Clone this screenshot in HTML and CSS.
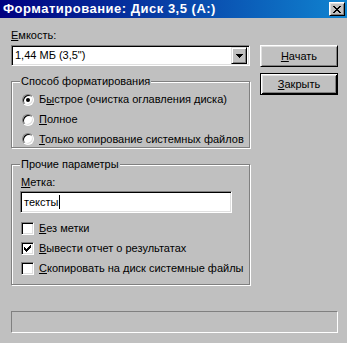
FILE: index.html
```html
<!DOCTYPE html>
<html lang="ru">
<head>
  <meta charset="UTF-8" />
  <title>Форматирование: Диск 3,5 (A:)</title>
  <meta name="viewport" content="width=device-width, initial-scale=1" />
  <link rel="stylesheet" href="styles.css">
</head>
<body>
  <div class="window">
    <div class="titlebar">
      <span class="title">Форматирование: Диск 3,5 (A:)</span>
      <button class="close-btn" type="button">
        <svg width="8" height="7" viewBox="0 0 8 7" shape-rendering="crispEdges">
          <path d="M0 0h2v1h-2zM6 0h2v1h-2zM1 1h2v1h-2zM5 1h2v1h-2zM2 2h4v1h-4zM3 3h2v1h-2zM2 4h4v1h-4zM1 5h2v1h-2zM5 5h2v1h-2zM0 6h2v1h-2zM6 6h2v1h-2z" fill="#000"/>
        </svg>
      </button>
    </div>

    <div class="client">
      <div class="main">
        <div class="left">
          <div class="field-label"><u>Е</u>мкость:</div>
          <div class="combo">
            <span class="combo-value">1,44 МБ (3,5")</span>
            <span class="combo-btn">
              <svg width="7" height="4" viewBox="0 0 7 4" shape-rendering="crispEdges">
                <path d="M0 0h7v1h-7zM1 1h5v1h-5zM2 2h3v1h-3zM3 3h1v1h-1z" fill="#000"/>
              </svg>
            </span>
          </div>

          <fieldset class="group group-mode">
            <legend>Способ форматирования</legend>
            <div class="option radio-option"><span class="radio checked"></span><span>Б<u>ы</u>строе (очистка оглавления диска)</span></div>
            <div class="option radio-option"><span class="radio"></span><span><u>П</u>олное</span></div>
            <div class="option radio-option"><span class="radio"></span><span><u>Т</u>олько копирование системных файлов</span></div>
          </fieldset>

          <fieldset class="group group-other">
            <legend>Прочие параметры</legend>
            <div class="field-label inner-label"><u>М</u>етка:</div>
            <div class="textbox">тексты<span class="caret"></span></div>
            <div class="checks">
              <div class="option"><span class="check"></span><span><u>Б</u>ез метки</span></div>
              <div class="option">
                <span class="check">
                  <svg width="7" height="7" viewBox="0 0 7 7" shape-rendering="crispEdges">
                    <path d="M6 0h1v3h-1zM5 1h1v3h-1zM4 2h1v3h-1zM3 3h1v3h-1zM2 4h1v3h-1zM1 3h1v3h-1zM0 2h1v3h-1z" fill="#000"/>
                  </svg>
                </span>
                <span><u>В</u>ывести отчет о результатах</span>
              </div>
              <div class="option"><span class="check"></span><span><u>С</u>копировать на диск системные файлы</span></div>
            </div>
          </fieldset>
        </div>

        <div class="right">
          <button class="btn" type="button"><u>Н</u>ачать</button>
          <button class="btn btn-default" type="button"><u>З</u>акрыть</button>
        </div>
      </div>

      <div class="progress"></div>
    </div>
  </div>
</body>
</html>
```

FILE: styles.css
```css
body {
  margin: 0;
  padding: 0;
  background: #c0c0c0;
  font-family: 'Liberation Sans', Arial, sans-serif;
  font-size: 11px;
  color: #000;
}

.window {
  width: 347px;
  height: 343px;
  background: #c0c0c0;
  overflow: hidden;
}

u {
  text-decoration: underline;
  text-underline-offset: 1px;
}

/* title bar */
.titlebar {
  height: 18px;
  display: flex;
  align-items: center;
  justify-content: space-between;
  padding: 0 2px 0 3px;
  background: linear-gradient(to right, #000080, #1084d0);
}

.title {
  color: #fff;
  font-weight: bold;
  font-size: 13px;
  letter-spacing: 0.5px;
  line-height: 18px;
  white-space: nowrap;
}

.close-btn {
  width: 16px;
  height: 14px;
  padding: 0;
  display: flex;
  align-items: center;
  justify-content: center;
  background: #c0c0c0;
  border: 1px solid;
  border-color: #fff #000 #000 #fff;
  box-shadow: inset 1px 1px #dfdfdf, inset -1px -1px #808080;
}

/* client area */
.client {
  padding: 0 9px 0 11px;
}

.main {
  display: flex;
  gap: 10px;
}

.left {
  width: 239px;
  padding-top: 11px;
}

.right {
  display: flex;
  flex-direction: column;
  gap: 6px;
  padding-top: 27px;
}

.field-label {
  line-height: 13px;
  white-space: nowrap;
}

/* combo box */
.combo {
  margin-top: 3px;
  height: 21px;
  box-sizing: border-box;
  display: flex;
  align-items: center;
  justify-content: space-between;
  background: #fff;
  border: 1px solid;
  border-color: #808080 #fff #fff #808080;
  box-shadow: inset 1px 1px #000, inset -1px -1px #dfdfdf;
  padding: 2px 2px 2px 3px;
}

.combo-value {
  line-height: 15px;
}

.combo-btn {
  width: 16px;
  height: 17px;
  box-sizing: border-box;
  display: flex;
  align-items: center;
  justify-content: center;
  background: #c0c0c0;
  border: 1px solid;
  border-color: #dfdfdf #000 #000 #dfdfdf;
  box-shadow: inset 1px 1px #fff, inset -1px -1px #808080;
}

/* group boxes */
.group {
  margin: 9px 0 0;
  padding: 4px 0 0 8px;
  border: 1px solid #808080;
  box-shadow: 1px 1px 0 #fff, inset 1px 1px 0 #fff;
  min-inline-size: 0;
}

.group legend {
  padding: 0 1px;
  line-height: 13px;
  background: #c0c0c0;
  white-space: nowrap;
}

.group-mode {
  display: flex;
  flex-direction: column;
  gap: 4px;
  height: 73px;
  box-sizing: border-box;
}

.group-other {
  margin-top: 10px;
  padding: 5px 0 8px 8px;
}

.option {
  display: flex;
  align-items: center;
  gap: 5px;
  height: 16px;
  line-height: 13px;
  white-space: nowrap;
}

.radio-option {
  margin-left: 2px;
}

.radio {
  width: 12px;
  height: 12px;
  box-sizing: border-box;
  border-radius: 50%;
  background: #fff;
  border: 1px solid;
  border-color: #808080 #fff #fff #808080;
  box-shadow: inset 1px 1px #000, inset -1px -1px #dfdfdf;
  display: flex;
  align-items: center;
  justify-content: center;
  flex-shrink: 0;
}

.radio.checked::after {
  content: "";
  width: 4px;
  height: 4px;
  border-radius: 50%;
  background: #000;
}

.inner-label {
  margin-left: 1px;
}

.textbox {
  margin-top: 2px;
  width: 212px;
  height: 22px;
  box-sizing: border-box;
  display: flex;
  align-items: center;
  padding-left: 3px;
  background: #fff;
  border: 1px solid;
  border-color: #808080 #fff #fff #808080;
  box-shadow: inset 1px 1px #000, inset -1px -1px #dfdfdf;
}

.caret {
  width: 1px;
  height: 14px;
  margin-left: 1px;
  background: #000;
}

.checks {
  margin-top: 7px;
  margin-left: 1px;
  display: flex;
  flex-direction: column;
  gap: 4px;
}

.check {
  width: 13px;
  height: 13px;
  box-sizing: border-box;
  background: #fff;
  border: 1px solid;
  border-color: #808080 #fff #fff #808080;
  box-shadow: inset 1px 1px #000, inset -1px -1px #dfdfdf;
  display: flex;
  align-items: center;
  justify-content: center;
  flex-shrink: 0;
}

/* buttons */
.btn {
  width: 78px;
  height: 22px;
  padding: 0;
  font-family: inherit;
  font-size: 11px;
  color: #000;
  background: #c0c0c0;
  border: 1px solid;
  border-color: #fff #000 #000 #fff;
  box-shadow: inset 1px 1px #dfdfdf, inset -1px -1px #808080;
}

.btn-default {
  border-color: #000;
  box-shadow: inset 1px 1px #fff, inset -1px -1px #000, inset 2px 2px #dfdfdf, inset -2px -2px #808080;
}

/* progress bar */
.progress {
  margin-top: 26px;
  height: 22px;
  box-sizing: border-box;
  border: 1px solid;
  border-color: #808080 #fff #fff #808080;
}
```
